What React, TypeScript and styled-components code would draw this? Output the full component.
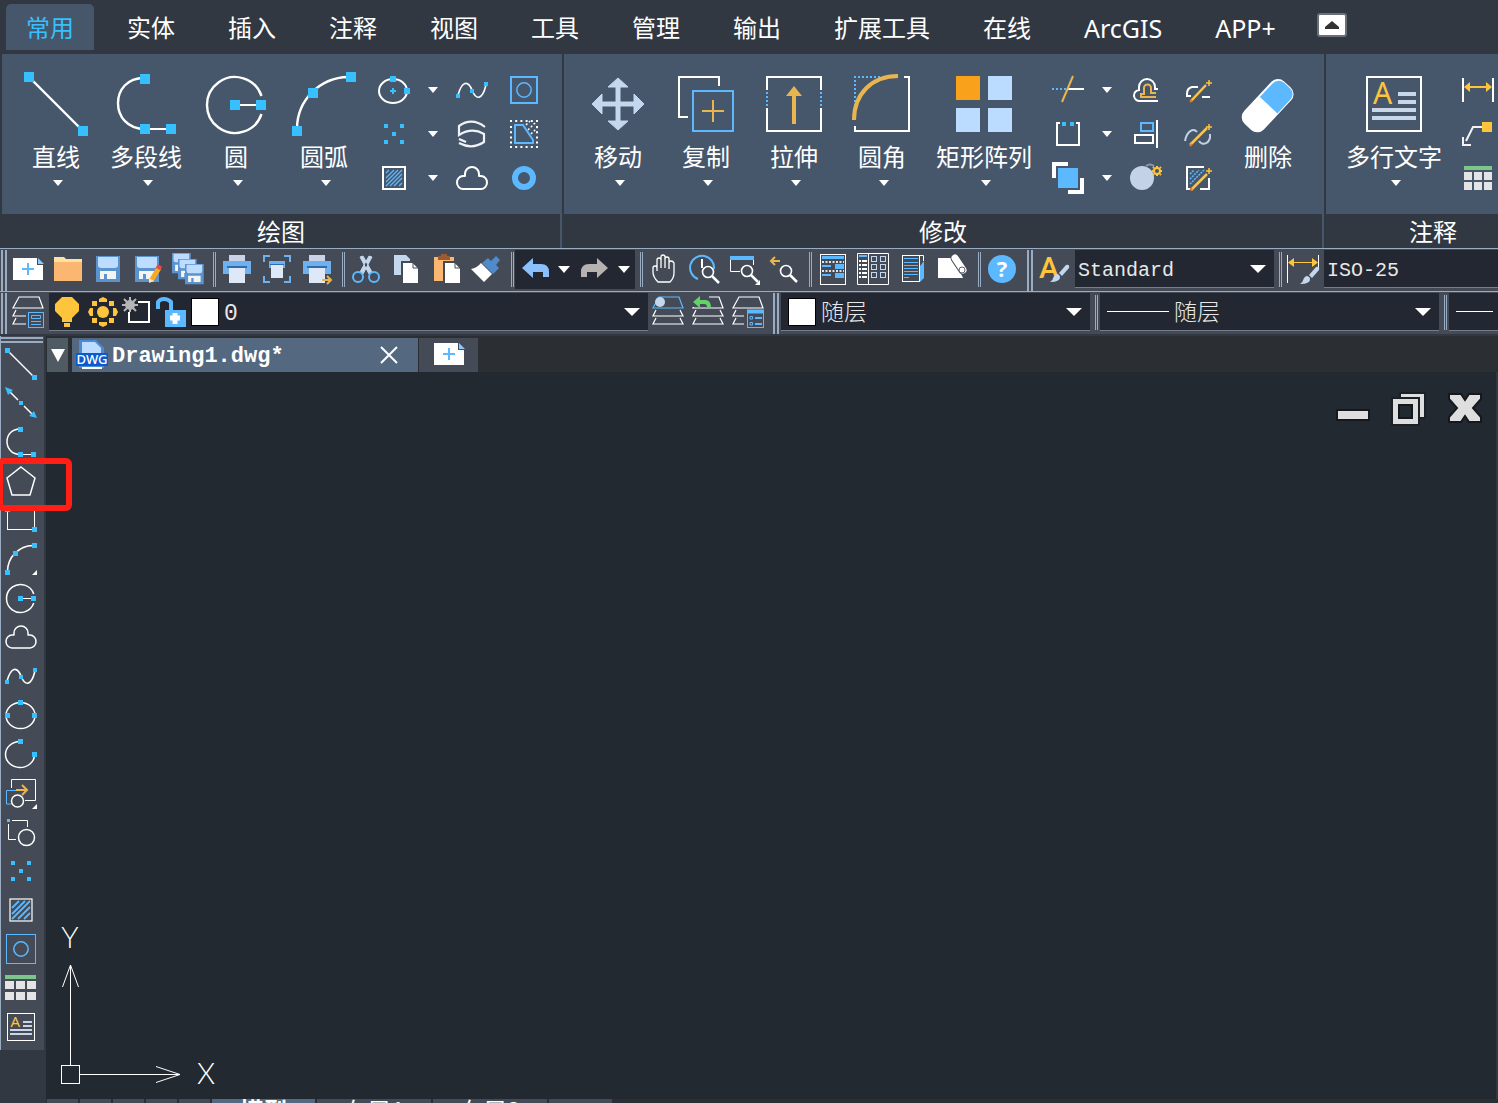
import React from "react";
import styled, { createGlobalStyle } from "styled-components";

const C = {
  chrome: "#323842",
  panel: "#47576b",
  bar: "#444b56",
  field: "#222731",
  canvas: "#222930",
  strip: "#2b2e32",
  rule: "#9aacc2",
  node: "#36c0ff",
  blue: "#5cb8ff",
  pale: "#c3d7ee",
  gold: "#e8b550",
  yellow: "#fec43c",
  white: "#ffffff",
};

const Global = createGlobalStyle`
  * { box-sizing: border-box; }
  body {
    margin: 0;
    background: ${C.canvas};
    color: ${C.white};
    font-family: "Noto Sans", "Noto Sans CJK SC", sans-serif;
    overflow: hidden;
  }
  button, select {
    font: inherit;
    color: inherit;
    background: none;
    border: 0;
    padding: 0;
    margin: 0;
  }
  svg { display: block; flex: none; overflow: visible; }
`;

/* ---------- layout parts ---------- */

const Page = styled.div`
  display: flex;
  flex-direction: column;
  height: 100vh;
  overflow: hidden;
  background: ${C.chrome};
`;

const Menu = styled.nav`
  display: flex;
  gap: 13px;
  height: 54px;
  padding: 4px 6px;
`;

const MenuTab = styled.button<{ $active?: boolean; $latin?: boolean }>`
  padding: 2px 20px 0;
  font-size: ${(p) => (p.$latin ? 25 : 24)}px;
  line-height: 44px;
  white-space: nowrap;
  border-radius: 5px 5px 0 0;
  color: ${(p) => (p.$active ? C.node : C.white)};
  background: ${(p) => (p.$active ? C.panel : "none")};
`;

const Collapse = styled.button`
  display: grid;
  place-items: center;
  width: 30px;
  height: 24px;
  margin: 9px 0 0 8px;
  background: ${C.white};
  border: 2px solid #6b6f76;
  border-radius: 3px;
`;

const Ribbon = styled.div`
  display: flex;
  gap: 2px;
  padding-left: 2px;
`;

const Group = styled.section<{ $width: number }>`
  flex: 0 0 ${(p) => p.$width}px;
`;

const GroupBody = styled.div`
  display: flex;
  height: 160px;
  padding: 14px 10px 0;
  background: ${C.panel};
`;

const GroupTitle = styled.h2`
  margin: 0;
  height: 34px;
  font-size: 24px;
  font-weight: 400;
  line-height: 36px;
  text-align: center;
  border-right: 2px solid ${C.panel};
`;

const BigButton = styled.button`
  display: flex;
  flex-direction: column;
  align-items: center;
  min-width: 88px;
  height: 128px;
  padding: 4px 10px 0;
  font-size: 24px;
  line-height: 24px;
  white-space: nowrap;
`;

const BigLabel = styled.span`
  margin: 9px 0 11px;
`;

const BigArrow = styled.span`
  padding-left: 4px;
`;

const SmallGrid = styled.div<{ $cols: string }>`
  display: grid;
  grid-template-columns: ${(p) => p.$cols};
  grid-auto-rows: 44px;
`;

const Cell = styled.button`
  display: grid;
  place-items: center;
`;

const Bar = styled.div`
  display: flex;
  align-items: flex-start;
  height: 43px;
  border-top: 1px solid ${C.rule};
  background: ${C.bar};
  overflow: hidden;
`;

const Grip = styled.div<{ $gap?: boolean }>`
  flex: none;
  width: 6px;
  height: 41px;
  margin: 1px 1px 0 ${(p) => (p.$gap ? 5 : 1)}px;
  border: solid ${C.rule};
  border-width: 0 2px;
`;

const Sep = styled.div`
  flex: none;
  width: 3px;
  height: 35px;
  margin: 3px 1px 0 5px;
  border: solid ${C.rule};
  border-width: 0 1px;
`;

const Tool = styled.button<{ $w?: number }>`
  display: grid;
  place-items: center;
  flex: none;
  width: ${(p) => p.$w ?? 40}px;
  height: 42px;
`;

const History = styled.div`
  display: flex;
  flex: none;
  height: 39px;
  margin-top: 1px;
  background: ${C.field};
`;

const HistoryTool = styled(Tool)`
  height: 39px;
`;

const Field = styled.div<{ $w?: number }>`
  display: flex;
  align-items: center;
  flex: ${(p) => (p.$w ? `0 0 ${p.$w}px` : "1 0 200px")};
  height: 38px;
  margin: 1px 0 0 1px;
  background: ${C.field};
  border-bottom: 1px solid #777d8a;
`;

const Pick = styled.div`
  flex: 1;
  display: flex;
  align-items: center;
  padding-right: 8px;
  height: 37px;
`;

const Select = styled.select`
  flex: 1;
  min-width: 0;
  height: 37px;
  padding: 4px 0 0 3px;
  appearance: none;
  outline: none;
  font-family: "Liberation Mono", "Noto Sans CJK SC", monospace;
  font-size: 20px;
  color: #e8e8e8;
`;

const WideSelect = styled(Select)`
  padding-left: 5px;
  font-size: 23px;
  font-weight: 300;
`;

const Swatch = styled.span<{ $left: number }>`
  flex: none;
  width: 28px;
  height: 28px;
  margin-left: ${(p) => p.$left}px;
  background: ${C.white};
  border: 1px solid #000;
`;

const LineSample = styled.span<{ $w: number }>`
  flex: none;
  width: ${(p) => p.$w}px;
  height: 1px;
  margin-left: 7px;
  background: ${C.white};
`;

const FieldTool = styled(Tool)`
  height: 37px;
`;

const Work = styled.div`
  display: flex;
  flex: 1;
  min-height: 0;
  padding-top: 2px;
`;

const Side = styled.aside`
  position: relative;
  flex: 0 0 46px;
`;

const Palette = styled.div`
  width: 44px;
  padding: 1px 1px 3px 0;
  background: ${C.bar};
  border-left: 1px solid ${C.rule};
`;

const PaletteGrip = styled.div`
  height: 6px;
  margin-bottom: 2px;
  border: solid ${C.rule};
  border-width: 2px 0;
`;

const PaletteTool = styled.button`
  display: flex;
  align-items: center;
  width: 100%;
  height: 39px;
  padding: 0 0 1px 4px;
`;

const Highlight = styled.div`
  position: absolute;
  z-index: 2;
  left: -3px;
  top: 122px;
  width: 75px;
  height: 53px;
  border: 6px solid #ff1f14;
  border-radius: 6px;
`;

const Main = styled.main`
  display: flex;
  flex-direction: column;
  flex: 1;
  min-width: 0;
`;

const Docs = styled.div`
  display: flex;
  align-items: flex-end;
  height: 36px;
  padding-left: 1px;
  background: ${C.strip};
`;

const DocMenu = styled.button`
  display: grid;
  place-items: center;
  width: 21px;
  height: 34px;
  margin-right: 4px;
  background: #4f5a62;
`;

const DocTab = styled.div`
  display: flex;
  align-items: center;
  width: 346px;
  height: 34px;
  margin-right: 1px;
  padding: 0 20px 0 4px;
  background: #54687f;
  font-family: "Liberation Mono", monospace;
  font-size: 22px;
  font-weight: 700;
`;

const DocName = styled.span`
  flex: 1;
  padding: 2px 0 0 4px;
`;

const DocNew = styled.button`
  display: grid;
  place-items: center;
  width: 59px;
  height: 34px;
  background: ${C.bar};
`;

const Canvas = styled.div`
  position: relative;
  flex: 1;
  background: ${C.canvas};
  border-right: 2px solid ${C.chrome};
`;

const WindowButtons = styled.div`
  display: flex;
  justify-content: flex-end;
  gap: 24px;
  padding: 20px 15px 0;
`;

const Ucs = styled.svg`
  position: absolute;
  left: 6px;
  bottom: 6px;
`;

const Sheets = styled.div`
  display: flex;
  align-items: flex-start;
  gap: 2px;
  flex: 0 0 4px;
  padding-left: 1px;
  overflow: hidden;
  background: ${C.strip};
`;

const Sheet = styled.button<{ $w: number; $active?: boolean }>`
  flex: 0 0 ${(p) => p.$w}px;
  height: 22px;
  font-family: "Noto Sans CJK SC", sans-serif;
  font-size: 24px;
  line-height: 22px;
  font-weight: ${(p) => (p.$active ? 700 : 400)};
  background: ${(p) => (p.$active ? "#54687f" : C.bar)};
`;

/* ---------- drawings ---------- */

type Kids = { children?: React.ReactNode };

const S = ({ children, vb = 32, size = 32 }: Kids & { vb?: number; size?: number }) => (
  <svg width={size} height={size} viewBox={`0 0 ${vb} ${vb}`} fill="none" stroke={C.white} strokeWidth={2} aria-hidden>
    {children}
  </svg>
);

const Tri = ({ w = 10, h = 6 }: { w?: number; h?: number }) => (
  <svg width={w} height={h} viewBox="0 0 10 6" preserveAspectRatio="none" aria-hidden>
    <path d="M0 0H10L5 6Z" fill={C.white} />
  </svg>
);

const Nodes = ({ at, s, fill = C.node }: { at: number[][]; s: number; fill?: string }) => (
  <g fill={fill} stroke="none">
    {at.map(([x, y]) => (
      <rect key={`${x}-${y}`} x={x} y={y} width={s} height={s} />
    ))}
  </g>
);

type Scale = { size?: number; w?: number };

const LineIcon = ({ size = 64, w = 2.4 }: Scale) => (
  <S vb={64} size={size}>
    <path d="M5 5L59 59" strokeWidth={w} />
    <Nodes s={10} at={[[0, 0], [54, 54]]} />
  </S>
);
const PolylineIcon = ({ size = 64, w = 2.4 }: Scale) => (
  <S vb={64} size={size}>
    <path d="M31 6C-5 5 -5 57 31 57" strokeWidth={w} />
    <path d="M31 57H56" />
    <Nodes s={10} at={[[26, 2], [26, 52], [52, 52]]} />
  </S>
);
const CircleIcon = ({ size = 64, w = 2.4 }: Scale) => (
  <S vb={64} size={size}>
    <path d="M57.5 24A28 28 0 1 0 57.5 42" strokeWidth={w} />
    <path d="M31 33H56" />
    <Nodes s={10} at={[[26, 28], [52, 28]]} />
  </S>
);
const ArcIcon = ({ size = 64, w = 2.4, more }: Scale & { more?: boolean }) => (
  <S vb={64} size={size}>
    <path d="M5 56A52 52 0 0 1 56 5" strokeWidth={w} />
    <Nodes s={10} at={[[54, 0], [16, 16], [0, 54]]} />
    {more && <path d="M64 54V64H54Z" fill={C.white} stroke="none" />}
  </S>
);
const MoveIcon = () => (
  <S vb={64} size={64}>
    <path
      d="M32 6L42 15H34V30H48V22L58 32L48 42V34H34V49H42L32 58L22 49H30V34H16V42L6 32L16 22V30H30V15H22Z"
      fill={C.pale} stroke={C.pale} strokeWidth={1}
    />
  </S>
);
const CopyIcon = () => (
  <S vb={64} size={64}>
    <path d="M45 14V5H5V45H14" />
    <rect x="19" y="19" width="40" height="40" stroke={C.blue} />
    <path d="M39 28V50M28 39H50" stroke={C.gold} />
  </S>
);
const StretchIcon = () => (
  <S vb={64} size={64}>
    <path d="M5 18V5H59V18M5 36V59H59V36" />
    <path d="M5 20V36M59 20V36" stroke={C.blue} strokeDasharray="2 2" />
    <path d="M32 14L40 24H34V52H30V24H24Z" fill={C.gold} stroke="none" />
  </S>
);
const FilletIcon = () => (
  <S vb={64} size={64}>
    <path d="M4 5H32M5 8V36" stroke={C.blue} strokeDasharray="2 2" />
    <path d="M54 5H59V59H5V54" />
    <path d="M4 48C4 22 22 4 48 4" stroke={C.gold} strokeWidth={4} />
  </S>
);
const ArrayIcon = () => (
  <S vb={64} size={64}>
    <Nodes s={24} fill="#f9a11b" at={[[4, 4]]} />
    <Nodes s={24} fill="#bcdcff" at={[[36, 4], [4, 36], [36, 36]]} />
  </S>
);
const EraserIcon = () => (
  <S vb={64} size={64}>
    <g transform="rotate(-47 32 34)" stroke="none">
      <rect x="3" y="20" width="58" height="27" rx="9" fill={C.white} />
      <path d="M33 22H52A8 8 0 0 1 60 30V38A8 8 0 0 1 52 46H33Z" fill={C.blue} />
    </g>
  </S>
);
const MTextIcon = ({ size = 64, w = 2 }: Scale) => (
  <S vb={64} size={size}>
    <rect x="5" y="5" width="54" height="54" strokeWidth={w} />
    <path d="M36 22H54M36 30H54M10 38H54M10 46H54" stroke="#c9d6e8" strokeWidth={4} />
    <text x="11" y="32" fontSize="30" fontWeight="400" fill={C.yellow} stroke="none" fontFamily="Noto Sans, sans-serif">A</text>
  </S>
);

const EllipseCenterIcon = () => (
  <S>
    <ellipse cx="15" cy="17" rx="14" ry="12" />
    <Nodes s={6} at={[[12, 2], [26, 14]]} />
    <path d="M15 14V20M12 17H18" stroke={C.node} />
  </S>
);
const PointsIcon = () => (
  <S><Nodes s={4} at={[[6, 6], [22, 6], [14, 14], [6, 22], [22, 22]]} /></S>
);
const HatchIcon = ({ fine }: { fine?: boolean }) => (
  <S>
    <rect x="5" y="5" width="22" height="22" strokeWidth={fine ? 1.2 : 2} />
    {fine ? (
      <path d="M7 14L14 7M7 20L20 7M7 25L25 7M13 25L25 13M19 25L25 19" stroke={C.blue} strokeWidth={1.8} />
    ) : (
      <path d="M8 11L11 8M8 16L16 8M8 20L20 8M8 24L24 8M12 24L24 12M16 24L24 16M21 24L24 21" stroke={C.blue} strokeWidth={1.3} />
    )}
  </S>
);
const SplineIcon = () => (
  <S>
    <path d="M2 21C6 7 12 6 16 16S26 27 30 11" strokeWidth={1.6} />
    <Nodes s={4} at={[[0, 20], [14, 15], [28, 8]]} />
  </S>
);
const HelixIcon = () => (
  <S><path d="M29 9Q16 -1 3 8V17Q16 9 28 16V24Q16 32 3 25M3 21L10 24" strokeWidth={2.2} stroke="#f0f2f5" /></S>
);
const CloudIcon = ({ w = 2 }: Scale) => (
  <S><path d="M7 27A6 6.5 0 0 1 7 14H9V12A7 7 0 0 1 23 12V14H25A6 6.5 0 0 1 25 27Z" strokeWidth={w} strokeLinejoin="round" /></S>
);
const BoundaryIcon = ({ wide }: { wide?: boolean }) => (
  <S>
    {wide ? <rect x="1.5" y="1.5" width="29" height="29" stroke={C.blue} strokeWidth={1} /> : <rect x="3" y="3" width="26" height="26" stroke={C.blue} />}
    <circle cx="16" cy="16" r="7.2" stroke={C.blue} strokeWidth={1.5} />
  </S>
);
const WipeoutIcon = () => (
  <S>
    <path d="M2 3H30M2 29H30M3 8V26M29 8V26" strokeDasharray="2 3.2" />
    <path d="M18 7L22 3M20 12L28 4M23 16L29 10" strokeDasharray="2 2" strokeWidth={1.5} />
    <path d="M7 7H15L25 22V25H7Z" stroke={C.blue} />
  </S>
);
const DonutIcon = () => (
  <S><circle cx="16" cy="16" r="9" stroke={C.blue} strokeWidth={6} /></S>
);

const Wand = ({ from = "M9 27L24 11" }: { from?: string }) => (
  <>
    <path d={from} stroke={C.yellow} strokeWidth={2.5} />
    <path d="M27 6V12M24 9H30" stroke={C.yellow} strokeWidth={1.5} />
    <path d="M8 28L10 26" stroke="#e8782a" />
  </>
);
const TrimIcon = () => (
  <S>
    <path d="M0 15H16" stroke={C.blue} strokeDasharray="2 2" />
    <path d="M16 15H32" />
    <path d="M21 2L10 28" stroke={C.gold} />
  </S>
);
const BreakIcon = () => (
  <S>
    <path d="M8 5H5V27H27V5H24" />
    <Nodes s={4} at={[[10, 4], [18, 4]]} />
  </S>
);
const OrderIcon = () => (
  <S>
    <path d="M2 16V2H16M30 16V30H16" strokeWidth={4} />
    <rect x="6" y="6" width="20" height="20" fill={C.blue} stroke="none" />
  </S>
);
const OffsetIcon = () => (
  <S>
    <path d="M28 27H10A5.5 5.5 0 0 1 9 16V13A8 8 0 0 1 25 13V15H28" />
    <path d="M26 23H11V20H14V14A3.5 3.5 0 0 1 21 14V19H26" stroke={C.gold} />
  </S>
);
const AlignIcon = () => (
  <S>
    <rect x="11" y="5" width="12" height="8" stroke={C.blue} />
    <rect x="5" y="17" width="18" height="8" />
    <path d="M27 2V30" />
  </S>
);
const ExplodeIcon = () => (
  <S>
    <circle cx="12" cy="16" r="12" fill="#c3d2e6" stroke="none" />
    <path d="M16 4Q20 1 24 4" stroke="#8d99a8" />
    <circle cx="27" cy="9" r="3" stroke={C.yellow} />
    <path d="M27 4V6M27 12V14M22 9H24M30 9H32M23 5L24 6M31 5L30 6M23 13L24 12M31 13L30 12" stroke={C.yellow} />
  </S>
);
const EditPolyIcon = () => (
  <S>
    <path d="M16 13H10Q5 14 5 20V22H9M20 23H28" />
    <Wand />
  </S>
);
const EditSplineIcon = () => (
  <S>
    <path d="M3 23C5 12 12 10 15 14M17 23C20 28 29 26 28 16" stroke="#c3d2e6" />
    <Wand from="M8 27L25 10" />
  </S>
);
const EditHatchIcon = () => (
  <S>
    <path d="M22 5H5V27H9M27 16V27H18" />
    <path d="M8 12L12 8M8 17L17 8M8 22L22 8" stroke={C.blue} strokeDasharray="2 1" strokeWidth={1.6} />
    <Wand from="M9 28L25 12" />
  </S>
);
const DimIcon = () => (
  <S>
    <path d="M1 4V28M31 4V28" />
    <path d="M4 13H28" stroke={C.yellow} />
    <path d="M2 13L8 8V18ZM30 13L24 8V18Z" fill={C.yellow} stroke="none" />
  </S>
);
const LeaderIcon = () => (
  <S>
    <path d="M20 9H11L4 23M1 19V27H9" stroke="#f1f3f6" />
    <Nodes s={10} fill={C.yellow} at={[[20, 4]]} />
  </S>
);
const TableIcon = ({ wide }: { wide?: boolean }) => {
  const xs = wide ? [0, 11, 22] : [2, 12, 22];
  const ys = wide ? [9, 20] : [10, 20];
  return (
    <S>
      <g stroke="none" fill="#e4e4e4">
        <rect x={xs[0]} y={wide ? 3 : 4} width={wide ? 31 : 28} height="4" fill="#7cc68a" />
        {ys.map((y) => xs.map((x) => <rect key={`${x}-${y}`} x={x} y={y} width={wide ? 9 : 8} height="8" />))}
      </g>
    </S>
  );
};

/* side palette drawings */
const XlineIcon = () => (
  <S>
    <path d="M5 5L13 13M19 19L27 27" strokeWidth={1.5} />
    <path d="M0 0L8 3L3 8ZM32 31L24 29L29 24Z" fill={C.node} stroke="none" />
    <Nodes s={4} at={[[14, 14]]} />
  </S>
);
const PentagonIcon = () => (
  <S><path d="M16 2L30 13L25 30H7L2 13Z" strokeWidth={1.5} /></S>
);
const RectIcon = () => (
  <S>
    <rect x="2.5" y="4.5" width="27" height="21" strokeWidth={1} />
    <Nodes s={5} at={[[0, 3], [27, 23]]} />
  </S>
);
const EllipseIcon = () => (
  <S>
    <ellipse cx="15.5" cy="16.5" rx="14.5" ry="13" strokeWidth={1.5} />
    <Nodes s={5} at={[[13, 1], [0, 14], [27, 14]]} />
  </S>
);
const EllipseArcIcon = () => (
  <S>
    <path d="M15 3.5A14.5 13 0 1 0 29.500 17" strokeWidth={1.5} />
    <Nodes s={5} at={[[13, 1], [27, 14]]} />
  </S>
);
const InsertIcon = () => (
  <S>
    <path d="M6.5 11V2.5H30.5V23.5H20" strokeWidth={1} />
    <path d="M14 13.5H1.5V27H6" stroke={C.blue} strokeWidth={1} />
    <path d="M11 13H21M17 8L22 13L17 18" stroke={C.gold} />
    <circle cx="12.5" cy="24" r="6" strokeWidth={1.5} />
    <path d="M32 27V32H27Z" fill={C.white} stroke="none" />
  </S>
);
const BlockIcon = () => (
  <S>
    <path d="M7 4.5H22.5V11M3.5 8V23.5H11" strokeWidth={1} />
    <circle cx="21.5" cy="21.5" r="8" strokeWidth={1.5} />
    <Nodes s={3} fill={C.blue} at={[[2, 3]]} />
  </S>
);

/* toolbar drawings */
const NewIcon = () => (
  <S>
    <path d="M1 4H25V11H31V26H1Z" fill={C.white} stroke="none" />
    <path d="M26 4V10H32Z" fill="#8cc8ff" stroke="none" />
    <path d="M16 9V21M10 15H22" stroke={C.blue} />
  </S>
);
const OpenIcon = () => (
  <S>
    <path d="M2 3H12L14 5H30V10H2Z" fill="#fbe2a3" stroke="none" />
    <path d="M2 8H30V27H2Z" fill="#fbb672" stroke="none" />
  </S>
);
const Floppy = ({ x, y, k = 1 }: { x: number; y: number; k?: number }) => (
  <g transform={`translate(${x} ${y}) scale(${k})`} stroke="none">
    <rect width="24" height="26" fill="#5b93cf" />
    <path d="M2 1H22V9Q22 12 19 12H5Q2 12 2 9Z" fill="#bddcff" />
    <path d="M4 15H20V23H11V18H8V23H4Z" fill="#f4f4f4" />
  </g>
);
const SaveIcon = () => <S><Floppy x={4} y={2} /></S>;
const SaveAsIcon = () => (
  <S>
    <Floppy x={3} y={2} />
    <path d="M19 27L27 14" stroke="#fba91f" strokeWidth={5} />
    <path d="M26 15L28 11.5" stroke="#e8474a" strokeWidth={5} />
    <path d="M17 24L22 27L17 29Z" fill="#fbe6c0" stroke="none" />
  </S>
);
const SaveAllIcon = () => (
  <S>
    <Floppy x={0} y={-1} k={0.78} />
    <Floppy x={6} y={5} k={0.78} />
    <Floppy x={13} y={10} k={0.78} />
  </S>
);
const Printer = () => (
  <g stroke="none">
    <rect x="8" y="1" width="16" height="7" fill="#c9d3e4" />
    <rect x="2" y="7" width="28" height="13" fill="#6fb1ee" />
    <rect x="8" y="14" width="16" height="15" fill="#dfe8f7" />
    <rect x="6" y="12" width="20" height="2" fill="#2f6cab" />
  </g>
);
const PrintIcon = () => <S><Printer /></S>;
const PreviewIcon = () => (
  <S>
    <path d="M3 8V2H9M23 2H29V8M29 22V28H23M9 28H3V22" stroke="#6fb1ee" />
    <g stroke="none">
      <rect x="8" y="7" width="16" height="7" fill="#6fb1ee" />
      <rect x="10" y="10" width="12" height="14" fill="#dfe8f7" />
      <rect x="9" y="10" width="14" height="1" fill="#2f6cab" />
    </g>
  </S>
);
const PlotIcon = () => (
  <S>
    <Printer />
    <path d="M21 26H30M26 22L30 26L26 30" stroke={C.gold} />
  </S>
);
const CutIcon = () => (
  <S>
    <path d="M10 3L13 2L22 18L19 20ZM22 3L19 2L10 18L13 20Z" fill={C.pale} stroke={C.pale} strokeWidth={1} />
    <circle cx="8" cy="23" r="5" stroke={C.blue} />
    <circle cx="24" cy="23" r="5" stroke={C.blue} />
  </S>
);
const FoldedSheet = ({ x }: { x: number }) => (
  <g transform={`translate(${x} 8)`}>
    <path d="M0 0H11L17 6V22H0Z" fill={C.white} stroke={C.bar} />
    <path d="M11 0V6H17" stroke={C.bar} strokeWidth={1} />
  </g>
);
const DuplicateIcon = () => (
  <S>
    <path d="M4 1H16L20 5V21H4Z" fill={C.pale} stroke="none" />
    <FoldedSheet x={12} />
  </S>
);
const PasteIcon = () => (
  <S>
    <rect x="4" y="3" width="20" height="24" fill="#fbb672" stroke="none" />
    <path d="M8 2H11V0H17V2H20V6H8Z" fill="#9a5a33" stroke="none" />
    <FoldedSheet x={14} />
  </S>
);
const BrushIcon = () => (
  <S>
    <path d="M12 9L18 4L21 7L26 2L30 6L26 11L29 14L23 20Z" fill="#4f8bcb" stroke="none" />
    <path d="M11 9L22 20L14 28L1 15Q7 14 11 9Z" fill={C.white} stroke="none" />
  </S>
);
const UndoIcon = ({ redo }: { redo?: boolean }) => (
  <S>
    <path
      d="M4 14L15 4V10H23Q31 10 31 18V23H25V18H15V24Z"
      fill={redo ? "#b5b2b0" : "#8cc0fb"} stroke="none"
      transform={redo ? "translate(34 0) scale(-1 1)" : undefined}
    />
  </S>
);
const HandIcon = () => (
  <S>
    <path
      d="M10 28C7 25 5 22 5 18V14Q5 12 7 12T9 14V17V6Q9 4 11 4T13 6V14V3Q13 1 15 1T17 3V14V5Q17 3 19 3T21 5V15V9Q21 7 23 7T26 9V19C26 23 24 26 22 28Z"
      strokeWidth={1.3}
    />
  </S>
);
const Lens = ({ x, y }: { x: number; y: number }) => (
  <g transform={`translate(${x} ${y})`}>
    <circle r="5.5" strokeWidth={1.6} fill={C.bar} />
    <path d="M4 4L11 11" strokeWidth={2.5} />
  </g>
);
const ZoomTimeIcon = () => (
  <S>
    <path d="M10 25A12 12 0 1 1 26 15" stroke={C.blue} />
    <path d="M14 5V14" />
    <Lens x={20} y={18} />
  </S>
);
const ZoomWindowIcon = () => (
  <S>
    <path d="M2.5 6V17.5H12M25.5 6V11" strokeWidth={1} />
    <rect x="2" y="2" width="24" height="4" fill={C.blue} stroke="none" />
    <Lens x={19} y={17} />
    <path d="M32 26V31H27Z" fill={C.white} stroke="none" />
  </S>
);
const ZoomBackIcon = () => (
  <S>
    <path d="M12 7H3M7 3L3 7L7 11" stroke={C.gold} />
    <Lens x={18} y={17} />
  </S>
);
const PropsIcon = () => (
  <S>
    <rect x="3.5" y=".5" width="25" height="30" strokeWidth={1} />
    <path d="M5 8H27M5 17H27" strokeDasharray="2 1.500" stroke="#dfe3ea" />
    <g fill={C.blue} stroke="none">
      <rect x="5" y="2" width="22" height="3" />
      <rect x="5" y="11" width="9" height="2" />
      <rect x="18" y="10" width="9" height="5" />
      <rect x="5" y="20" width="9" height="2" />
      <rect x="18" y="19" width="9" height="5" />
    </g>
  </S>
);
const CenterIcon = () => (
  <S>
    <path d="M.5 -.5H31.5V30.5H.5ZM11.5 0V30" strokeWidth={1} />
    <path d="M2 2H10" stroke={C.blue} />
    <path d="M2 7H10M2 11H10M2 15H10M2 19H10M2 23H10" strokeDasharray="2 1 5 0" />
    <g stroke={C.pale} strokeWidth={1}>
      {[2.5, 10.5, 18.5].map((y) => [14.5, 23.5].map((x) => <rect key={`${x}-${y}`} x={x} y={y} width="5" height="5" />))}
    </g>
  </S>
);
const PaletteBookIcon = () => (
  <S>
    <rect x="5.5" y="1.5" width="17" height="26" strokeWidth={1} />
    <path d="M7 4.5H21M7 8.5H21M7 11.5H21M7 14.5H21M7 17.5H21M7 20.5H21M7 23.5H12" stroke={C.blue} strokeWidth={1} />
    <path d="M23 12L27 7V24L23 28Z" fill={C.blue} stroke="none" />
    <path d="M22.5 1.5H26.5V7" strokeWidth={1} />
  </S>
);
const ScrollIcon = () => (
  <S>
    <path d="M1 4H17L26 24H1Z" fill={C.white} stroke="none" />
    <path d="M18 4L26 16" strokeWidth={9} stroke={C.bar} strokeLinecap="round" />
    <path d="M18 4L26 16" strokeWidth={7} strokeLinecap="round" />
    <circle cx="25" cy="16" r="3" stroke="#59616d" strokeWidth={1} />
  </S>
);
const HelpIcon = () => (
  <S>
    <circle cx="16" cy="15" r="14" fill={C.blue} stroke="none" />
    <text x="16" y="23" textAnchor="middle" fontSize="22" fontWeight="700" fill={C.white} stroke="none" fontFamily="Open Sans, sans-serif">?</text>
  </S>
);
const PaintTip = ({ x, y }: { x: number; y: number }) => (
  <g transform={`translate(${x} ${y})`} fill={C.pale} stroke="none">
    <path d="M-1 18Q2 16 3 12Q6 8 9 12Q10 18 -1 18Z" />
    <path d="M8 9L15 1Q19 0 18 4L11 12Z" />
  </g>
);
const TextStyleIcon = () => (
  <S>
    <text x="1" y="24" fontSize="30" fontWeight="500" fill={C.yellow} stroke="none" fontFamily="Roboto, sans-serif">A</text>
    <PaintTip x={13} y={10} />
  </S>
);
const DimStyleIcon = () => (
  <S>
    <path d="M.5 1V29M31.5 1V14" strokeWidth={1} />
    <path d="M4 8.5H28" stroke={C.yellow} strokeWidth={1} />
    <path d="M1 8.5L7 4V13ZM31 8.5L25 4V13Z" fill={C.yellow} stroke="none" />
    <PaintTip x={14} y={12} />
  </S>
);
const Stack = ({ top = C.white }: { top?: string }) => (
  <g strokeWidth={1.2}>
    <path d="M7 0H27L31 11H1Z" stroke={top} />
    <path d="M4 13L1 19H31L28 13M4 21L1 27H31L28 21" />
  </g>
);
const LayerIcon = () => (
  <S>
    <Stack />
    <rect x="14" y="13" width="20" height="20" fill={C.bar} stroke="none" />
    <rect x="16.5" y="15.5" width="15" height="15" stroke={C.blue} strokeWidth={1} />
    <path d="M19.5 18.5H28.5V21.5H19.5ZM19 24.5H29M19 27.5H29" stroke={C.blue} strokeWidth={1} />
  </S>
);
const LayerCurrentIcon = () => (
  <S>
    <Stack top={C.blue} />
    <circle cx="8" cy="5" r="5" fill={C.pale} stroke="none" />
  </S>
);
const LayerBackIcon = () => (
  <S>
    <Stack />
    <path d="M3 -2H17V3H21V10H0V-2Z" fill={C.bar} stroke="none" />
    <path d="M1 5L8 -1V3H14Q19 4 19 10H15Q15 7 12 7H8V11Z" fill="#63d267" stroke="none" />
  </S>
);
const LayerStateIcon = () => (
  <S>
    <Stack />
    <rect x="12" y="12" width="22" height="21" fill={C.bar} stroke="none" />
    <rect x="15.5" y="14.5" width="16" height="16" stroke={C.blue} strokeWidth={1} />
    <path d="M15 14.500H32" stroke={C.blue} strokeWidth={4} />
    <path d="M18 19.5H20.5V22H18ZM18 25.500H20.5V28H18Z" stroke={C.blue} strokeWidth={1} />
    <path d="M23 21H30M23 27H30" stroke={C.blue} />
  </S>
);
const BulbIcon = () => (
  <S>
    <path d="M11 1H21L28 8V15L21 22V26H11V22L4 15V8Z" fill={C.yellow} stroke="none" />
    <rect x="13" y="27" width="6" height="4" fill={C.yellow} stroke="none" />
  </S>
);
const SunIcon = () => (
  <S>
    <circle cx="17" cy="16" r="6" fill={C.yellow} stroke="none" />
    <Nodes s={5} fill={C.yellow} at={[[6, 5], [23, 5], [6, 22], [23, 22]]} />
    <path d="M13 6V3L17 1L21 3V6ZM13 26V29L17 31L21 29V26ZM7 12H4L2 16L4 20H7ZM27 12H30L32 16L30 20H27Z" fill={C.yellow} stroke="none" />
  </S>
);
const FreezeIcon = () => (
  <S>
    <path d="M18 6H29V26H9V16" />
    <circle cx="10" cy="9" r="5" fill="#b5b5b8" stroke="none" />
    <path d="M10 1V16M2 9H18M4 3L16 15M16 3L4 15" stroke="#b5b5b8" />
  </S>
);
const UnlockIcon = () => (
  <S>
    <path d="M4 13V6Q6 3 10 3T17 6V14" stroke={C.blue} strokeWidth={4} />
    <rect x="11" y="14" width="21" height="17" fill={C.blue} stroke="none" />
    <path d="M21 17V28M16 22H26" strokeWidth={5} />
  </S>
);
const DwgIcon = () => (
  <svg width="32" height="32" viewBox="0 0 32 32" aria-hidden>
    <path d="M3 1H20L28 9V29H3Z" fill="#4b8bd6" />
    <path d="M6 3H19L25 9V14H6Z" fill="#bddcff" />
    <rect y="14" width="32" height="13" fill="#0a5bd0" />
    <path d="M6 29H26" stroke={C.white} strokeWidth="2" />
    <text x="16" y="25" textAnchor="middle" fontSize="13" fontWeight="500" fill={C.white} fontFamily="Noto Sans, sans-serif">DWG</text>
  </svg>
);

/* ---------- composition ---------- */

const Big = ({ label, icon, menu = true }: { label: string; icon: React.ReactNode; menu?: boolean }) => (
  <BigButton>
    {icon}
    <BigLabel>{label}</BigLabel>
    {menu && <BigArrow><Tri /></BigArrow>}
  </BigButton>
);

type Named = [string, React.ReactNode];

const Cells = ({ items }: { items: Named[] }) => (
  <>
    {items.map(([name, icon], i) => (
      <Cell key={i} aria-label={name}>{icon}</Cell>
    ))}
  </>
);

const Tools = ({ items }: { items: Named[] }) => (
  <>
    {items.map(([name, icon]) => (
      <Tool key={name} aria-label={name}>{icon}</Tool>
    ))}
  </>
);

const menus = ["常用", "实体", "插入", "注释", "视图", "工具", "管理", "输出", "扩展工具", "在线", "ArcGIS", "APP+"];

const drop: Named = ["更多", <Tri key="t" />];

const drawCells: Named[] = [
  ["椭圆", <EllipseCenterIcon />], drop, ["样条曲线", <SplineIcon />], ["边界", <BoundaryIcon />],
  ["点", <PointsIcon />], drop, ["螺旋", <HelixIcon />], ["区域覆盖", <WipeoutIcon />],
  ["图案填充", <HatchIcon />], drop, ["修订云线", <CloudIcon />], ["圆环", <DonutIcon />],
];

const modifyCells: Named[] = [
  ["修剪", <TrimIcon />], drop, ["偏移", <OffsetIcon />], ["编辑多段线", <EditPolyIcon />],
  ["打断", <BreakIcon />], drop, ["对齐", <AlignIcon />], ["编辑样条曲线", <EditSplineIcon />],
  ["绘图次序", <OrderIcon />], drop, ["分解", <ExplodeIcon />], ["编辑图案填充", <EditHatchIcon />],
];

const noteCells: Named[] = [["标注", <DimIcon />], ["引线", <LeaderIcon />], ["表格", <TableIcon />]];

const palette: Named[] = [
  ["直线", <LineIcon size={32} w={3} />],
  ["构造线", <XlineIcon />],
  ["多段线", <PolylineIcon size={32} w={3} />],
  ["正多边形", <PentagonIcon />],
  ["矩形", <RectIcon />],
  ["圆弧", <ArcIcon size={32} w={3} more />],
  ["圆", <CircleIcon size={32} w={3} />],
  ["修订云线", <CloudIcon w={1.5} />],
  ["样条曲线", <SplineIcon />],
  ["椭圆", <EllipseIcon />],
  ["椭圆弧", <EllipseArcIcon />],
  ["插入块", <InsertIcon />],
  ["创建块", <BlockIcon />],
  ["点", <PointsIcon />],
  ["图案填充", <HatchIcon fine />],
  ["面域", <BoundaryIcon wide />],
  ["表格", <TableIcon wide />],
  ["多行文字", <MTextIcon size={32} w={2} />],
];

const Chevron = () => <Tri w={16} h={8} />;

export default function App() {
  return (
    <Page>
      <Global />
      <Menu>
        {menus.map((m, i) => (
          <MenuTab key={m} $active={i === 0} $latin={/^[A-Z]/.test(m)}>{m}</MenuTab>
        ))}
        <Collapse aria-label="折叠功能区">
          <svg width="14" height="8" viewBox="0 0 14 8" aria-hidden><path d="M0 8V6L7 0L14 6V8Z" fill="#333" /></svg>
        </Collapse>
      </Menu>

      <Ribbon>
        <Group $width={560}>
          <GroupBody>
            <Big label="直线" icon={<LineIcon />} />
            <Big label="多段线" icon={<PolylineIcon />} />
            <Big label="圆" icon={<CircleIcon />} />
            <Big label="圆弧" icon={<ArcIcon />} />
            <SmallGrid $cols="52px 26px 52px 52px"><Cells items={drawCells} /></SmallGrid>
          </GroupBody>
          <GroupTitle>绘图</GroupTitle>
        </Group>
        <Group $width={760}>
          <GroupBody>
            <Big label="移动" icon={<MoveIcon />} />
            <Big label="复制" icon={<CopyIcon />} />
            <Big label="拉伸" icon={<StretchIcon />} />
            <Big label="圆角" icon={<FilletIcon />} />
            <Big label="矩形阵列" icon={<ArrayIcon />} />
            <SmallGrid $cols="52px 26px 52px 52px"><Cells items={modifyCells} /></SmallGrid>
            <Big label="删除" icon={<EraserIcon />} menu={false} />
          </GroupBody>
          <GroupTitle>修改</GroupTitle>
        </Group>
        <Group $width={216}>
          <GroupBody>
            <Big label="多行文字" icon={<MTextIcon />} />
            <SmallGrid $cols="52px"><Cells items={noteCells} /></SmallGrid>
          </GroupBody>
          <GroupTitle>注释</GroupTitle>
        </Group>
      </Ribbon>

      <Bar>
        <Grip />
        <Tools items={[["新建", <NewIcon />], ["打开", <OpenIcon />], ["保存", <SaveIcon />], ["另存为", <SaveAsIcon />], ["全部保存", <SaveAllIcon />]]} />
        <Sep />
        <Tools items={[["打印", <PrintIcon />], ["打印预览", <PreviewIcon />], ["发布", <PlotIcon />]]} />
        <Sep />
        <Tools items={[["剪切", <CutIcon />], ["复制", <DuplicateIcon />], ["粘贴", <PasteIcon />], ["特性匹配", <BrushIcon />]]} />
        <Sep />
        <History>
          <HistoryTool $w={38} aria-label="放弃"><UndoIcon /></HistoryTool>
          <HistoryTool $w={22} aria-label="放弃列表"><Tri w={12} h={7} /></HistoryTool>
          <HistoryTool $w={38} aria-label="重做"><UndoIcon redo /></HistoryTool>
          <HistoryTool $w={22} aria-label="重做列表"><Tri w={12} h={7} /></HistoryTool>
        </History>
        <Sep />
        <Tools items={[["平移", <HandIcon />], ["实时缩放", <ZoomTimeIcon />], ["窗口缩放", <ZoomWindowIcon />], ["缩放上一个", <ZoomBackIcon />]]} />
        <Sep />
        <Tools items={[["特性", <PropsIcon />], ["设计中心", <CenterIcon />], ["工具选项板", <PaletteBookIcon />], ["图纸集", <ScrollIcon />]]} />
        <Sep />
        <Tools items={[["帮助", <HelpIcon />]]} />
        <Grip $gap />
        <Tools items={[["文字样式", <TextStyleIcon />]]} />
        <Field $w={199}>
          <Pick>
            <Select aria-label="文字样式"><option>Standard</option></Select>
            <Chevron />
          </Pick>
        </Field>
        <Sep />
        <Tools items={[["标注样式", <DimStyleIcon />]]} />
        <Field>
          <Select aria-label="标注样式"><option>ISO-25</option></Select>
        </Field>
      </Bar>

      <Bar>
        <Grip />
        <Tools items={[["图层特性", <LayerIcon />]]} />
        <Field $w={599}>
          <FieldTool $w={36} aria-label="开关图层"><BulbIcon /></FieldTool>
          <FieldTool $w={34} aria-label="冻结图层"><SunIcon /></FieldTool>
          <FieldTool $w={34} aria-label="视口冻结"><FreezeIcon /></FieldTool>
          <FieldTool $w={34} aria-label="锁定图层"><UnlockIcon /></FieldTool>
          <Swatch $left={4} />
          <Pick>
            <WideSelect aria-label="图层"><option>0</option></WideSelect>
            <Chevron />
          </Pick>
        </Field>
        <Tools items={[["置为当前", <LayerCurrentIcon />], ["上一个图层", <LayerBackIcon />], ["图层状态", <LayerStateIcon />]]} />
        <Grip $gap />
        <Field $w={309}>
          <Swatch $left={7} />
          <Pick>
            <WideSelect aria-label="颜色"><option>随层</option></WideSelect>
            <Chevron />
          </Pick>
        </Field>
        <Sep />
        <Field $w={339}>
          <LineSample $w={62} />
          <Pick>
            <WideSelect aria-label="线型"><option>随层</option></WideSelect>
            <Chevron />
          </Pick>
        </Field>
        <Sep />
        <Field>
          <LineSample $w={37} />
        </Field>
      </Bar>

      <Work>
        <Side>
          <Palette>
            <PaletteGrip />
            {palette.map(([name, icon]) => (
              <PaletteTool key={name} aria-label={name}>{icon}</PaletteTool>
            ))}
          </Palette>
          <Highlight />
        </Side>
        <Main>
          <Docs>
            <DocMenu aria-label="图纸列表"><Tri w={14} h={13} /></DocMenu>
            <DocTab>
              <DwgIcon />
              <DocName>Drawing1.dwg*</DocName>
              <button aria-label="关闭图纸">
                <svg width="18" height="18" viewBox="0 0 18 18" aria-hidden><path d="M1 1L17 17M17 1L1 17" stroke={C.white} strokeWidth="2" /></svg>
              </button>
            </DocTab>
            <DocNew aria-label="新建图纸"><NewIcon /></DocNew>
          </Docs>
          <Canvas>
            <WindowButtons>
              <button aria-label="最小化">
                <S><rect x="0" y="18" width="32" height="10" fill="#dedede" stroke="#15181d" /></S>
              </button>
              <button aria-label="还原">
                <S>
                  <path d="M7 1H32V26H26V8H7Z" fill="#dedede" stroke="#1b1f26" />
                  <path d="M-1 6H26V33H-1Z" fill="#dedede" stroke="#1b1f26" />
                  <rect x="6" y="13" width="13" height="13" fill={C.canvas} stroke="#15181d" />
                </S>
              </button>
              <button aria-label="关闭">
                <S><path d="M0 2H12L16 8L20 2H32V7L24 16L32 25V30H20L16 24L12 30H0V25L8 16L0 7Z" fill="#dedede" stroke="#15181d" /></S>
              </button>
            </WindowButtons>
            <Ucs width="166" height="170" viewBox="0 0 166 170" fill="none" stroke={C.white} strokeWidth="1" aria-label="UCS">
              <rect x="9.5" y="142.5" width="18" height="18" />
              <path d="M18.5 142V42M10.5 64L18.5 42L26.5 64M28 151.5H128M104 143.5L128 151.5L104 159.5" />
              <g fill={C.white} stroke="none" fontFamily="Lato, sans-serif" fontWeight="300" fontSize="29" textAnchor="middle">
                <text x="18" y="25">Y</text>
                <text x="154" y="161">X</text>
              </g>
            </Ucs>
          </Canvas>
          <Sheets>
            <Sheet $w={31} aria-label="第一个" />
            <Sheet $w={31} aria-label="上一个" />
            <Sheet $w={31} aria-label="下一个" />
            <Sheet $w={31} aria-label="最后一个" />
            <Sheet $w={31} aria-label="列表" />
            <Sheet $w={103} $active>模型</Sheet>
            <Sheet $w={114}>布局1</Sheet>
            <Sheet $w={114}>布局2</Sheet>
            <Sheet $w={63} aria-label="新建布局" />
          </Sheets>
        </Main>
      </Work>
    </Page>
  );
}
